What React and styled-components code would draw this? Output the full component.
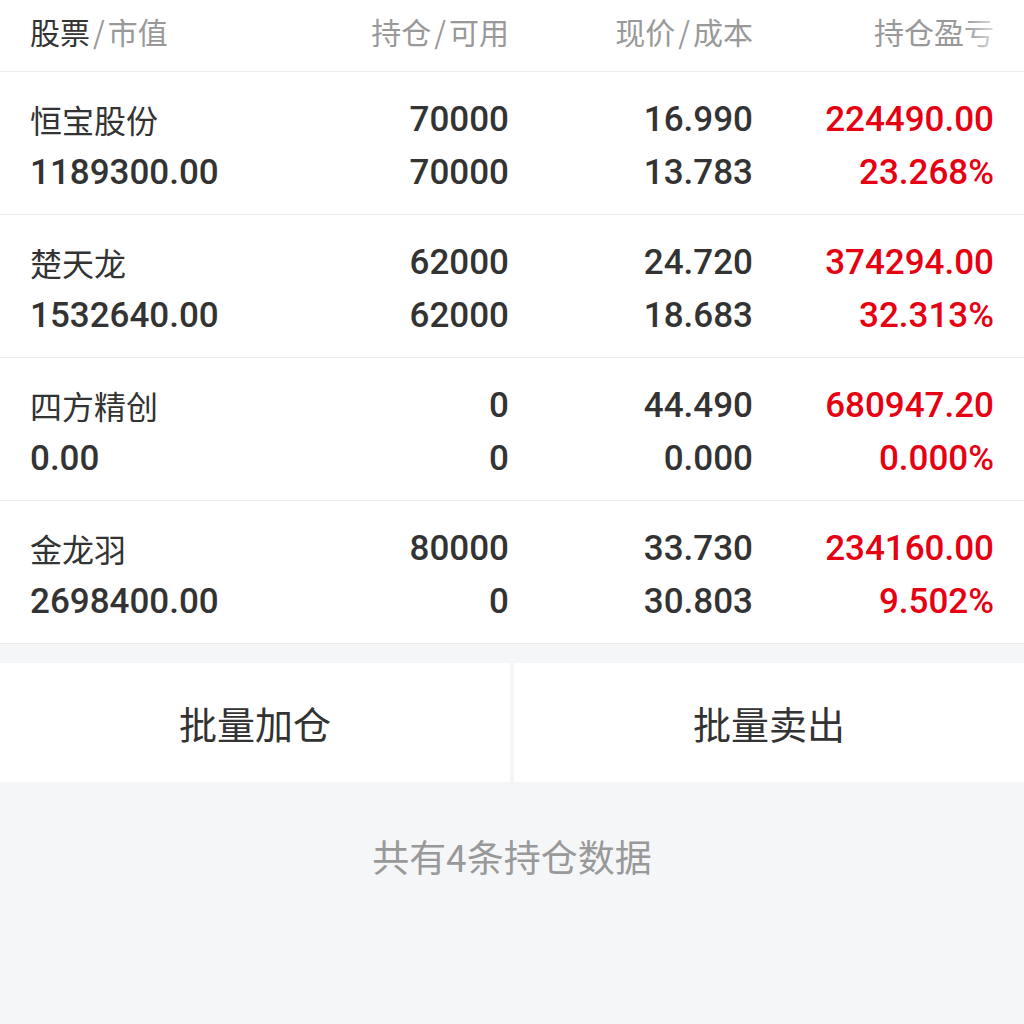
import React from 'react'
import styled, { createGlobalStyle } from 'styled-components'

const GlobalStyle = createGlobalStyle`
  html, body {
    margin: 0;
    padding: 0;
    background: #f5f6f8;
  }
  body {
    font-family: Roboto, 'Noto Sans CJK SC', sans-serif;
    -webkit-font-smoothing: antialiased;
  }
`

const RED = '#e60012'

const positions = [
  { name: '恒宝股份', value: '1189300.00', hold: '70000', avail: '70000', price: '16.990', cost: '13.783', profit: '224490.00', rate: '23.268%' },
  { name: '楚天龙', value: '1532640.00', hold: '62000', avail: '62000', price: '24.720', cost: '18.683', profit: '374294.00', rate: '32.313%' },
  { name: '四方精创', value: '0.00', hold: '0', avail: '0', price: '44.490', cost: '0.000', profit: '680947.20', rate: '0.000%' },
  { name: '金龙羽', value: '2698400.00', hold: '80000', avail: '0', price: '33.730', cost: '30.803', profit: '234160.00', rate: '9.502%' },
]

const Page = styled.div`
  width: 1024px;
  min-height: 1024px;
  background: #f5f6f8;
`

const Table = styled.section`
  background: #fff;
`

const HeaderRow = styled.div`
  display: grid;
  grid-template-columns: repeat(4, 1fr);
  align-items: center;
  height: 72px;
  padding: 0 30px 10px;
  box-sizing: border-box;
  border-bottom: 1px solid #ececec;
  font-family: 'Noto Sans CJK SC', sans-serif;
  font-size: 30px;
  color: #999;
  position: relative;

  &::after {
    content: '';
    position: absolute;
    top: 0;
    right: 0;
    width: 60px;
    height: 71px;
    background: linear-gradient(to right, rgba(255, 255, 255, 0), #fff 78%);
  }
`

const HeadCell = styled.div`
  text-align: ${p => (p.$left ? 'left' : 'right')};
  padding-right: ${p => (p.$inset ? '3px' : '0')};
  white-space: nowrap;
`

const Strong = styled.span`
  color: #333;
`

const Slash = styled.span`
  margin: 0 3px;
`

const Row = styled.div`
  display: grid;
  grid-template-columns: repeat(4, 1fr);
  padding: 21px 30px 15px;
  border-bottom: 1px solid #ececec;
  color: #333;
`

const Cell = styled.div`
  display: flex;
  flex-direction: column;
  align-items: ${p => (p.$left ? 'flex-start' : 'flex-end')};
  padding-right: ${p => (p.$inset ? '3px' : '0')};
  color: ${p => (p.$red ? RED : '#333')};
`

const Line = styled.div`
  height: 53px;
  line-height: 53px;
  font-size: 35px;
  font-weight: 500;
  white-space: nowrap;
`

const Name = styled(Line)`
  font-family: 'Noto Sans CJK SC', sans-serif;
  font-size: 32px;
  font-weight: 400;
`

const Actions = styled.div`
  display: grid;
  grid-template-columns: 1fr 1fr;
  gap: 4px;
  margin-top: 19px;
`

const ActionButton = styled.button`
  height: 119px;
  border: none;
  background: #fff;
  font-family: 'Noto Sans CJK SC', sans-serif;
  font-size: 38px;
  color: #333;
  padding: 0;
  cursor: pointer;
`

const Footer = styled.div`
  padding-top: 52px;
  text-align: center;
  font-family: 'Noto Sans CJK SC', sans-serif;
  font-size: 37px;
  line-height: 44px;
  color: #999;
`

export default function App() {
  return (
    <Page>
      <GlobalStyle />
      <Table>
        <HeaderRow>
          <HeadCell $left>
            <Strong>股票</Strong><Slash>/</Slash>市值
          </HeadCell>
          <HeadCell $inset>持仓<Slash>/</Slash>可用</HeadCell>
          <HeadCell>现价<Slash>/</Slash>成本</HeadCell>
          <HeadCell>持仓盈亏</HeadCell>
        </HeaderRow>
        {positions.map(p => (
          <Row key={p.name}>
            <Cell $left>
              <Name>{p.name}</Name>
              <Line>{p.value}</Line>
            </Cell>
            <Cell $inset>
              <Line>{p.hold}</Line>
              <Line>{p.avail}</Line>
            </Cell>
            <Cell>
              <Line>{p.price}</Line>
              <Line>{p.cost}</Line>
            </Cell>
            <Cell $red>
              <Line>{p.profit}</Line>
              <Line>{p.rate}</Line>
            </Cell>
          </Row>
        ))}
      </Table>
      <Actions>
        <ActionButton>批量加仓</ActionButton>
        <ActionButton>批量卖出</ActionButton>
      </Actions>
      <Footer>共有4条持仓数据</Footer>
    </Page>
  )
}
